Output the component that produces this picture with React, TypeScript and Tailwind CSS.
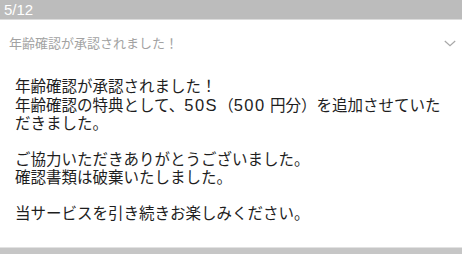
const jp = {
  fontFamily: '"Liberation Sans", "Noto Sans CJK JP", "Noto Sans", sans-serif',
};

const Num = ({ children }: { children: string }) => (
  <span className="text-[16.5px] tracking-[1.5px]">{children}</span>
);

const groups = [
  [
    "年齢確認が承認されました！",
    <>
      年齢確認の特典として、<Num>50S</Num>（<Num>500</Num> 円分）を追加させていた
    </>,
    "だきました。",
  ],
  ["ご協力いただきありがとうございました。", "確認書類は破棄いたしました。"],
  ["当サービスを引き続きお楽しみください。"],
];

export default function App() {
  return (
    <div className="w-[462px] h-[254px] bg-white flex flex-col overflow-hidden" style={jp}>
      <div className="h-[19px] bg-[#bcbcbc] border-b border-[#dcdcdc] box-content flex items-center px-[4px]">
        <span className="text-white text-[15px] leading-none">5/12</span>
      </div>

      <div className="h-[49px] flex items-center justify-between pl-[9px] pr-[6px] pb-[3px]">
        <span className="text-[#a2a2a2] text-[13px] leading-none">年齢確認が承認されました！</span>
        <svg width="12" height="7" viewBox="0 0 12 7" fill="none">
          <path d="M0.8 1L6 5.8L11.2 1" stroke="#a8a8a8" strokeWidth="1.2" />
        </svg>
      </div>

      <div className="flex-1 flex flex-col gap-[18px] px-[15px] pt-[9px] text-[#1e1e1e] text-[15.5px] leading-[18px]">
        {groups.map((group, i) => (
          <div key={i}>
            {group.map((t, j) => (
              <div key={j} className="whitespace-nowrap">
                {t}
              </div>
            ))}
          </div>
        ))}
      </div>

      <div className="h-[7px] bg-[#c6c6c6] border-t border-[#e2e2e2]" />
    </div>
  );
}
